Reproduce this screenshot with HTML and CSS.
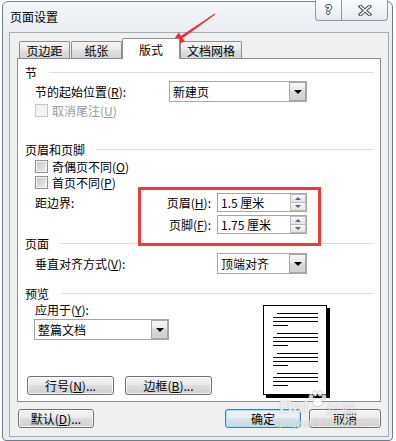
FILE: index.html
```html
<!DOCTYPE html>
<html lang="zh-CN">
<head>
<meta charset="utf-8">
<title>页面设置</title>
<link rel="stylesheet" href="styles.css">
</head>
<body>
<div class="window">
  <div class="titlebar">
    <div class="title">页面设置</div>
    <div class="caption">
      <div class="cap-btn help"><span class="help-glyph">?</span></div>
      <div class="cap-btn close">
        <svg width="14" height="11" viewBox="0 0 14 11">
          <path d="M2.5 1.5 L11.5 9.5 M11.5 1.5 L2.5 9.5" stroke="#3a4350" stroke-width="3.6" stroke-linecap="square" fill="none"/>
          <path d="M2.5 1.5 L11.5 9.5 M11.5 1.5 L2.5 9.5" stroke="#ffffff" stroke-width="1.6" stroke-linecap="square" fill="none"/>
        </svg>
      </div>
    </div>
  </div>
  <div class="client">
    <div class="tabs">
      <div class="tab t1">页边距</div>
      <div class="tab t2">纸张</div>
      <div class="tab active">版式</div>
      <div class="tab t4">文档网格</div>
    </div>
    <div class="panel">
      <div class="sec-head"><span>节</span><i class="rule"></i></div>
      <div class="row h21">
        <span class="lbl w134">节的起始位置(<u>R</u>):</span>
        <div class="select w138"><span class="val">新建页</span><span class="dd"><i class="tri"></i></span></div>
      </div>
      <div class="row h16 disabled"><span class="cb"></span><span>取消尾注(<u>U</u>)</span></div>

      <div class="sec-head mt22"><span>页眉和页脚</span><i class="rule"></i></div>
      <div class="row h16"><span class="cb"></span><span>奇偶页不同(<u>O</u>)</span></div>
      <div class="row h16"><span class="cb"></span><span>首页不同(<u>P</u>)</span></div>
      <div class="row h19 mt3">
        <span class="lbl w120">距边界:</span>
        <span class="lbl2">页眉(<u>H</u>):</span>
        <div class="spin"><span class="val">1.5 厘米</span><span class="spin-btns"><span class="sb up"><i></i></span><span class="sb down"><i></i></span></span></div>
      </div>
      <div class="row h19 mt3">
        <span class="lbl w120"></span>
        <span class="lbl2">页脚(<u>F</u>):</span>
        <div class="spin"><span class="val">1.75 厘米</span><span class="spin-btns"><span class="sb up"><i></i></span><span class="sb down"><i></i></span></span></div>
      </div>

      <div class="sec-head"><span>页面</span><i class="rule"></i></div>
      <div class="row h21 mt1">
        <span class="lbl w182">垂直对齐方式(<u>V</u>):</span>
        <div class="select w90"><span class="val">顶端对齐</span><span class="dd"><i class="tri"></i></span></div>
      </div>

      <div class="sec-head mt10"><span>预览</span><i class="rule"></i></div>
      <div class="preview">
        <div class="pv-left">
          <span class="pv-label">应用于(<u>Y</u>):</span>
          <div class="select w135 pv-select"><span class="val">整篇文档</span><span class="dd"><i class="tri"></i></span></div>
          <div class="pv-btns">
            <div class="btn pv-btn">行号(<u>N</u>)...</div>
            <div class="btn pv-btn">边框(<u>B</u>)...</div>
          </div>
        </div>
        <div class="pv-page">
          <div class="grp"><i class="ln ind"></i><i class="ln"></i><i class="ln"></i><i class="ln short"></i></div>
          <div class="grp"><i class="ln ind"></i><i class="ln"></i><i class="ln"></i><i class="ln short"></i></div>
          <div class="grp"><i class="ln ind"></i><i class="ln"></i><i class="ln"></i><i class="ln short"></i></div>
          <div class="grp"><i class="ln ind"></i><i class="ln"></i><i class="ln"></i><i class="ln short"></i></div>
        </div>
      </div>
    </div>
    <div class="footer">
      <div class="btn b-default">默认(<u>D</u>)...</div>
      <div class="btn b-ok default">确定</div>
      <div class="btn b-cancel">取消</div>
    </div>
  </div>
</div>

<div class="highlight"></div>
<svg class="arrow" width="396" height="441" viewBox="0 0 396 441">
  <polygon points="215.3,14.4 182.7,38.3 180.9,35.9 214.7,13.6" fill="#e8322f"/>
  <polygon points="168,47.5 185,41.4 178.7,32.6" fill="#e8322f"/>
</svg>
<div class="watermark">
  <div class="wm-top"><span class="wm-bai">Bai</span><svg class="wm-paw" width="20" height="18" viewBox="0 0 20 18"><ellipse cx="4" cy="7" rx="2.2" ry="2.8" /><ellipse cx="8" cy="3.5" rx="2.2" ry="2.8"/><ellipse cx="13" cy="3.5" rx="2.2" ry="2.8"/><ellipse cx="17" cy="7" rx="2.2" ry="2.8"/><ellipse cx="10.5" cy="12.5" rx="5" ry="4"/></svg><span class="wm-jy">经验</span></div>
  <div class="wm-url">jingyan.baidu.com</div>
</div>
</body>
</html>
```
FILE: styles.css
```css
* { box-sizing: border-box; }
html, body { margin: 0; padding: 0; }
body {
  width: 396px; height: 441px; overflow: hidden; position: relative;
  background: #ffffff;
  font-family: "Noto Sans CJK SC", "Noto Sans", sans-serif;
  font-size: 12px; color: #000;
}
u { text-decoration: underline; text-underline-offset: 1px; }

.window {
  margin: 1px 0 0 2px; width: 391px; height: 440px;
  border: 1px solid #6f7d8d; border-radius: 6px 6px 4px 4px;
  background: linear-gradient(#f4f6f9, #e9edf2 30px, #e9edf2);
  display: flex; flex-direction: column;
}
.titlebar {
  height: 30px; flex: none; padding-left: 7px;
  display: flex; justify-content: space-between; align-items: flex-start;
}
.title { line-height: 30px; font-size: 12px; }
.caption { display: flex; margin-top: -2px; margin-right: 4px; }
.cap-btn {
  height: 21px; border: 1px solid #8b97a6; border-top: none;
  background: linear-gradient(#fbfcfd, #e7ebf0);
  display: flex; align-items: center; justify-content: center;
}
.help { width: 27px; border-radius: 0 0 0 4px; }
.close { width: 46px; border-left: none; border-radius: 0 0 4px 0; }
.help-glyph {
  font-family: "DejaVu Sans", sans-serif; font-weight: bold; font-size: 12px; line-height: 1;
  color: #fff;
  text-shadow: 1px 0 #3a4350, -1px 0 #3a4350, 0 1px #3a4350, 0 -1px #3a4350;
}

.client {
  margin: 0 3px 0 6px; height: 405px; flex: none;
  border: 1px solid #a3abb5; background: #f0f0f0;
  display: flex; flex-direction: column;
}
.tabs { height: 25px; flex: none; padding: 5px 0 0 9px; display: flex; align-items: flex-end; }
.tab {
  height: 17px; border: 1px solid #8c8e94; border-bottom: none; border-radius: 2px 2px 0 0;
  background: linear-gradient(#f4f4f4, #ebebeb 45%, #dedede 55%, #d4d4d4);
  display: flex; align-items: center; justify-content: center; padding-top: 1px;
}
.t1 { width: 51px; margin-right: 1px; }
.t2 { width: 51px; }
.t4 { width: 62px; }
.tab.active {
  width: 58px; height: 21px; margin-bottom: -1px; background: #fff;
  position: relative; z-index: 1; padding-top: 0;
}

.panel {
  margin: 0 7px; height: 344px; flex: none;
  border: 1px solid #898c95; background: #fff; padding-top: 4px;
  display: flex; flex-direction: column;
}
.sec-head { height: 18px; flex: none; display: flex; align-items: center; gap: 12px; padding: 0 6px 0 7px; }
.rule { flex: 1; height: 1px; background: #d5dfe5; }
.mt22 { margin-top: 22px; }
.mt10 { margin-top: 10px; }
.mt3 { margin-top: 3px; }
.mt1 { margin-top: 1px; }

.row { flex: none; display: flex; align-items: center; padding-left: 17px; }
.h21 { height: 21px; }
.h19 { height: 19px; }
.h16 { height: 16px; }
.lbl { flex: none; }
.w134 { width: 134px; }
.w120 { width: 120px; }
.w182 { width: 182px; }
.lbl2 { width: 62px; flex: none; text-align: right; padding-right: 6px; }
.disabled { color: #9a9a9a; }

.cb {
  width: 13px; height: 13px; flex: none; margin-right: 4px;
  border: 1px solid #8e8f8f;
  background: linear-gradient(135deg, #c0c5cb, #eeeff0);
  box-shadow: inset 0 0 0 1px #f7f7f7;
}
.disabled .cb { border-color: #c6c6c6; background: #f4f4f4; box-shadow: none; }

.select { display: flex; height: 21px; border: 1px solid #a5a5a5; background: #fff; flex: none; }
.w138 { width: 138px; }
.w90 { width: 90px; }
.w135 { width: 135px; }
.select .val { flex: 1; padding-left: 3px; display: flex; align-items: center; }
.dd {
  width: 17px; border: 1px solid #a7a7a7;
  background: linear-gradient(#f7f7f7, #e7e7e7 50%, #d9d9d9 50%, #d0d0d0);
  display: flex; align-items: center; justify-content: center;
}
.tri { width: 0; height: 0; border-left: 4px solid transparent; border-right: 4px solid transparent; border-top: 4px solid #000; }

.spin { width: 90px; height: 19px; flex: none; display: flex; border: 1px solid #a5a5a5; background: #fff; }
.spin .val { flex: 1; padding-left: 3px; display: flex; align-items: center; }
.spin-btns { width: 16px; display: flex; flex-direction: column; }
.sb {
  flex: 1; border: 1px solid #bcbcbc;
  background: linear-gradient(#f8f8f8, #e4e4e4);
  display: flex; align-items: center; justify-content: center;
}
.sb.down { border-top: none; }
.sb i { width: 0; height: 0; border-left: 3px solid transparent; border-right: 3px solid transparent; }
.sb.up i { border-bottom: 3px solid #4f6689; }
.sb.down i { border-top: 3px solid #4f6689; }

.preview { display: flex; padding-left: 9px; flex: none; }
.pv-left { width: 236px; flex: none; display: flex; flex-direction: column; }
.pv-label { height: 15px; margin-left: 8px; display: flex; align-items: center; }
.pv-select { margin-top: 2px; margin-left: 7px; }
.pv-btns { margin-top: 36px; display: flex; gap: 11px; }
.pv-btn { width: 87px; height: 18px; }

.pv-page {
  width: 64px; height: 90px; flex: none; margin-top: 3px;
  border: 1px solid #000; background: #fff; box-shadow: 3px 3px 0 #000;
  padding: 7px 0 0 9px; display: flex; flex-direction: column; gap: 7px;
}
.grp { display: flex; flex-direction: column; gap: 3px; }
.ln { display: block; height: 1px; width: 45px; background: #000; }
.ln.ind { margin-left: 4px; width: 41px; }
.ln.short { width: 15px; }

.btn {
  height: 19px; border: 1px solid #707070; border-radius: 3px;
  background: linear-gradient(#f2f2f2, #ebebeb 45%, #dddddd 50%, #cfcfcf);
  box-shadow: inset 0 0 0 1px rgba(255,255,255,0.75);
  display: flex; align-items: center; justify-content: center; line-height: 1;
}
.footer { display: flex; padding: 7px 7px 0 8px; }
.b-default { width: 76px; }
.b-ok { width: 76px; margin-left: auto; }
.b-cancel { width: 72px; margin-left: 8px; }
.btn.default {
  border-color: #3c7fb1;
  box-shadow: inset 0 0 0 1px #a8def6;
  background: linear-gradient(#f0f6f9, #e6eff4 45%, #d6e3ea 50%, #cad8e0);
}

.highlight {
  position: absolute; left: 138px; top: 187px; width: 183px; height: 59px;
  border: 3px solid #ee3a3a;
}
.arrow { position: absolute; left: 0; top: 0; }

.watermark {
  position: absolute; left: 279px; top: 386px; width: 92px;
  color: rgba(255,255,255,0.8); pointer-events: none;
}
.wm-top { display: flex; align-items: flex-end; height: 30px; }
.wm-bai {
  font-family: "Liberation Sans", sans-serif; font-weight: bold; font-size: 19px; line-height: 1;
  text-shadow: 0 0 1px rgba(110,110,110,0.55);
}
.wm-paw { fill: rgba(255,255,255,0.8); stroke: rgba(140,140,140,0.45); stroke-width: 0.8; margin: 0 0 8px -2px; }
.wm-jy { font-size: 15px; line-height: 1; text-shadow: 0 0 1px rgba(110,110,110,0.55); }
.wm-url {
  font-family: "Liberation Sans", sans-serif; font-size: 11px; line-height: 13px; margin-top: 1px;
  text-shadow: 0 0 1px rgba(110,110,110,0.55);
}
```
